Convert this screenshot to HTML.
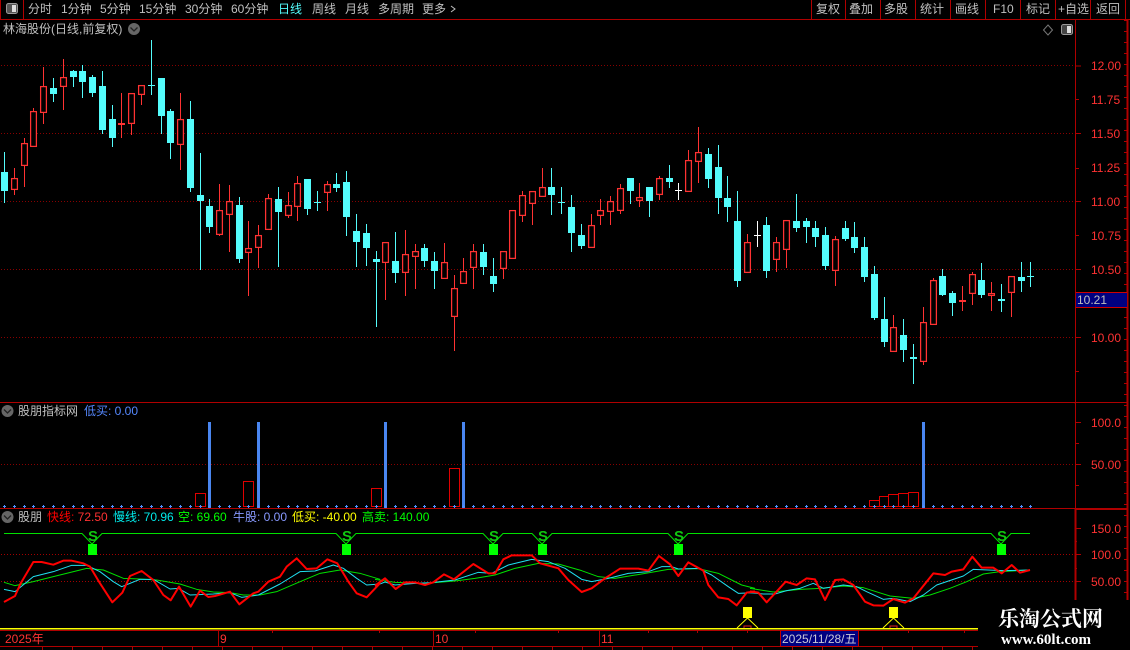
<!DOCTYPE html>
<html lang="zh">
<head>
<meta charset="utf-8">
<title>林海股份</title>
<style>
html,body{margin:0;padding:0;background:#000;}
#wrap{position:relative;width:1130px;height:650px;overflow:hidden;background:#000;font-family:"Liberation Sans","WenQuanYi Zen Hei","Noto Sans CJK SC",sans-serif;font-size:12px;line-height:14px;color:#c0c0c0;}
#wrap svg{position:absolute;left:0;top:0;}
.t{position:absolute;white-space:nowrap;}
.a{color:#ff3232;}
.s{position:absolute;white-space:nowrap;top:530px;color:#10c810;font-size:15px;font-weight:bold;line-height:14px;}
</style>
</head>
<body>
<div id="wrap">
<svg id="s" width="1130" height="650" viewBox="0 0 1130 650" shape-rendering="crispEdges">
  <!-- main frame lines -->
  <g stroke="#b00000" fill="none">
    <path d="M0 19.5H1130M0.5 0V19M23.5 0V19M811.5 0V19M845.5 0V19M880.5 0V19M915.5 0V19M950.5 0V19M985.5 0V19M1020.5 0V19M1055.5 0V19M1090.5 0V19M1125.5 0V19"/>
    <path d="M1075.5 20V600M0 402.5H1127M0 508.5H1127M0 630.5H978M0 646.5H978M218.5 631V646M433.5 631V646M599.5 631V646"/>
    <path d="M1075 403.5V403M1075 509.5H1127" stroke-width="1"/>
    <path d="M1127.5 20V600" stroke-width="2"/>
    <path d="M1075.5 508V600" stroke-width="2"/>
    <path d="M1075 66H1081M1075 99.5H1079M1075 133.5H1081M1075 168.5H1079M1075 201.5H1081M1075 235.5H1079M1075 269.5H1081M1075 303.5H1079M1075 337.5H1081M1075 371.5H1079M1075 422.5H1081M1075 443.5H1079M1075 464.5H1081M1075 485.5H1079M1075 528.5H1081M1075 541.5H1077M1075 554.5H1081M1075 568.5H1077M1075 581.5H1081"/>
    <path d="M272.5 631V633M379.5 631V633M475.5 631V633M558.5 631V633M648.5 631V633M697.5 631V633M747.5 631V633M908.5 631V633M964.5 631V633"/>
  </g>
  <!-- grid -->
  <g stroke="#a00000" stroke-dasharray="1 2" fill="none" opacity=".85">
    <path d="M1 65.5H1075M1 133.5H1075M1 201.5H1075M1 269.5H1075M1 337.5H1075M1 464.5H1075"/>
    <path d="M1 554.5H1075M1 581.5H1075" stroke="#c00000"/>
  </g>
  <g id="ticks" stroke="#b00000" fill="none"></g>
  <g id="candles"></g>

  <!-- indicator 2 -->
  <g fill="#4a86f0">
    <rect x="208" y="422" width="3" height="86"/>
    <rect x="257" y="422" width="3" height="86"/>
    <rect x="384" y="422" width="3" height="86"/>
    <rect x="462" y="422" width="3" height="86"/>
    <rect x="922" y="422" width="3" height="86"/>
  </g>
  <g fill="none" stroke="#e00000">
    <rect x="195.5" y="493.5" width="10" height="13"/>
    <rect x="243.5" y="481.5" width="10" height="25"/>
    <rect x="371.5" y="488.5" width="10" height="18"/>
    <rect x="449.5" y="468.5" width="10" height="38"/>
    <rect x="869.5" y="500.5" width="10" height="6"/>
    <rect x="879.5" y="496.5" width="9" height="10"/>
    <rect x="888.5" y="494.5" width="10" height="12"/>
    <rect x="898.5" y="493.5" width="10" height="13"/>
    <rect x="908.5" y="492.5" width="10" height="14"/>
  </g>
  <g id="plus" fill="#5090ff"></g>

  <!-- indicator 3 -->
  <g shape-rendering="auto" fill="none" stroke-linejoin="round">
    <path stroke="#00e000" stroke-width="1" d="M4 533.5H82L92 544L102 533.5H336L346 544L356 533.5H483L493 544L503 533.5H532L542 544L552 533.5H668L678 544L688 533.5H991L1001 544L1011 533.5H1030"/>
    <!-- green slow -->
    <g stroke="#00e000" stroke-width="1" vector-effect="non-scaling-stroke">
      <polyline transform="translate(0 520) scale(.33333)" stroke-width="3" points="12,187 45,197 100,185 160,170 260,145 310,150 370,175 420,177 470,180 540,192 590,208 640,216 690,218 730,225 780,225 830,215 900,185 960,160 1020,150 1080,160 1140,178"/>
      <polyline transform="translate(375 520) scale(.33333)" stroke-width="3" points="0,178 60,187 150,190 240,183 300,175 360,165 420,145 490,130 550,132 620,152 670,170 720,175 800,162 880,148 970,146 1030,160 1100,195 1140,205"/>
      <polyline transform="translate(750 520) scale(.33333)" stroke-width="3" points="0,205 70,216 150,208 210,205 280,198 340,203 420,228 490,235 540,225 600,205 650,185 700,162 750,155 840,150"/>
    </g>
    <!-- cyan -->
    <g stroke="#20e0f0">
      <polyline transform="translate(0 520) scale(.33333)" stroke-width="3" points="12,208 45,215 100,170 160,155 215,136 260,136 300,155 340,185 365,200 420,178 460,178 510,207 535,205 570,225 640,222 690,218 725,232 775,225 840,192 900,155 945,153 1000,135 1030,145 1070,175 1100,195 1140,192"/>
      <polyline transform="translate(375 520) scale(.33333)" stroke-width="3" points="0,198 30,186 60,195 120,190 170,188 240,180 310,157 350,160 400,135 470,118 520,125 570,145 620,178 650,185 700,175 760,160 820,155 860,140 890,140 910,147 970,145 1010,165 1060,200 1090,220 1140,218"/>
      <polyline transform="translate(750 520) scale(.33333)" stroke-width="3" points="0,218 40,222 75,222 110,212 150,205 190,190 220,205 280,195 320,200 350,215 400,238 430,235 480,245 520,225 560,195 640,168 670,148 760,152 840,150"/>
    </g>
    <!-- red fast -->
    <g stroke="#ff0000">
      <polyline transform="translate(0 520) scale(.33333)" stroke-width="6" points="12,246 45,228 62,190 100,126 125,126 160,134 190,122 215,122 250,130 270,140 300,190 337,247 367,218 390,168 425,153 460,180 490,225 512,241 537,200 572,260 600,212 625,231 645,228 690,215 718,253 760,220 775,215 805,185 840,170 860,140 890,115 920,147 950,145 982,118 1012,130 1045,185 1070,220 1100,232 1140,190"/>
      <polyline transform="translate(375 520) scale(.33333)" stroke-width="6" points="0,197 30,175 62,207 90,187 120,187 150,195 175,187 207,163 237,178 295,132 340,160 360,160 385,118 410,106 470,106 495,130 550,145 580,180 620,216 650,205 690,175 735,146 790,146 820,152 852,108 885,133 910,168 940,127 985,152 1000,195 1030,232 1060,237 1085,256 1115,218 1140,214"/>
      <polyline transform="translate(750 520) scale(.33333)" stroke-width="6" points="0,214 25,218 50,247 75,220 107,185 140,195 170,175 195,178 225,240 255,180 280,178 310,195 345,245 370,256 400,257 430,237 465,248 490,235 550,160 585,165 605,155 640,148 667,110 695,143 730,143 755,160 785,135 810,158 840,150"/>
    </g>
    <path stroke="#ffff00" stroke-width="1" d="M737 628L747.5 618L758 628M883 628L893.5 618L904 628"/>
  </g>
  <rect x="0" y="628" width="978" height="1.5" fill="#ffff00"/>
  <path d="M744 628V626H751V628M890 628V626H897V628" fill="none" stroke="#e02020"/>
  <g fill="#00ff00">
    <rect x="88" y="544" width="9" height="11"/>
    <rect x="342" y="544" width="9" height="11"/>
    <rect x="489" y="544" width="9" height="11"/>
    <rect x="538" y="544" width="9" height="11"/>
    <rect x="674" y="544" width="9" height="11"/>
    <rect x="997" y="544" width="9" height="11"/>
  </g>
  <g fill="#ffff00">
    <rect x="743" y="607" width="9" height="11"/>
    <rect x="889" y="607" width="9" height="11"/>
  </g>
  <!-- icons -->
  <g shape-rendering="auto">
    <rect x="6.5" y="3.5" width="11" height="10" rx="2" fill="#555" stroke="#999"/>
    <rect x="12" y="5" width="4" height="7" fill="#ddd"/>
    <rect x="1061.5" y="24.5" width="11" height="10" rx="2" fill="#444" stroke="#999"/>
    <rect x="1067" y="26" width="4" height="7" fill="#ddd"/>
    <path d="M1048 25L1052.5 30L1048 35L1043.5 30Z" fill="none" stroke="#777"/>
    <circle cx="134" cy="29" r="6" fill="#666"/>
    <path d="M130.5 27.5L134 31L137.5 27.5" fill="none" stroke="#222" stroke-width="1.3"/>
    <circle cx="7.5" cy="411" r="6" fill="#666"/>
    <path d="M4 409.5L7.5 413L11 409.5" fill="none" stroke="#222" stroke-width="1.3"/>
    <circle cx="7.5" cy="517" r="6" fill="#666"/>
    <path d="M4 515.5L7.5 519L11 515.5" fill="none" stroke="#222" stroke-width="1.3"/>
    <path d="M451 6L455 9L451 12" fill="none" stroke="#c0c0c0"/>
  </g>
  <rect x="1076" y="292" width="51" height="16" fill="#000080"/>
  <path d="M1076 292.5H1127M1076 307.5H1127" stroke="#d00000" fill="none"/>
  <rect x="780.5" y="630.5" width="78" height="16" fill="#000080" stroke="#c00000"/>
  <rect x="978" y="600" width="152" height="50" fill="#000"/>
</svg>

<!-- top menu -->
<div class="t" style="left:28px;top:2px">分时</div>
<div class="t" style="left:61px;top:2px">1分钟</div>
<div class="t" style="left:100px;top:2px">5分钟</div>
<div class="t" style="left:139px;top:2px">15分钟</div>
<div class="t" style="left:185px;top:2px">30分钟</div>
<div class="t" style="left:231px;top:2px">60分钟</div>
<div class="t" style="left:278px;top:2px;color:#54fcfc">日线</div>
<div class="t" style="left:312px;top:2px">周线</div>
<div class="t" style="left:345px;top:2px">月线</div>
<div class="t" style="left:378px;top:2px">多周期</div>
<div class="t" style="left:422px;top:2px">更多</div>

<div class="t" style="left:816px;top:2px">复权</div>
<div class="t" style="left:849px;top:2px">叠加</div>
<div class="t" style="left:884px;top:2px">多股</div>
<div class="t" style="left:920px;top:2px">统计</div>
<div class="t" style="left:955px;top:2px">画线</div>
<div class="t" style="left:993px;top:2px">F10</div>
<div class="t" style="left:1026px;top:2px">标记</div>
<div class="t" style="left:1058px;top:2px">+自选</div>
<div class="t" style="left:1096px;top:2px">返回</div>

<div class="t" style="left:3px;top:22px">林海股份(日线,前复权)</div>

<!-- axis labels -->
<div class="t a" style="left:1091px;top:59px">12.00</div>
<div class="t a" style="left:1091px;top:93px">11.75</div>
<div class="t a" style="left:1091px;top:127px">11.50</div>
<div class="t a" style="left:1091px;top:161px">11.25</div>
<div class="t a" style="left:1091px;top:195px">11.00</div>
<div class="t a" style="left:1091px;top:229px">10.75</div>
<div class="t a" style="left:1091px;top:263px">10.50</div>
<div class="t a" style="left:1091px;top:331px">10.00</div>
<div class="t" style="left:1077px;top:293px">10.21</div>
<div class="t a" style="left:1091px;top:416px">100.0</div>
<div class="t a" style="left:1091px;top:458px">50.00</div>
<div class="t a" style="left:1091px;top:522px">150.0</div>
<div class="t a" style="left:1091px;top:548px">100.0</div>
<div class="t a" style="left:1091px;top:575px">50.00</div>

<!-- indicator titles -->
<div class="t" style="left:18px;top:404px">股朋指标网</div>
<div class="t" style="left:84px;top:404px;color:#5588ff">低买: 0.00</div>
<div class="t" style="left:18px;top:510px">股朋</div>
<div class="t" style="left:47px;top:510px;color:#ff0000">快线: <span style="color:#ff3232">72.50</span></div>
<div class="t" style="left:113px;top:510px;color:#00e8e8">慢线: 70.96</div>
<div class="t" style="left:178px;top:510px;color:#00ff00">空: 69.60</div>
<div class="t" style="left:233px;top:510px;color:#8899ff">牛股: 0.00</div>
<div class="t" style="left:292px;top:510px;color:#ffff00">低买: -40.00</div>
<div class="t" style="left:362px;top:510px;color:#00ff00">高卖: 140.00</div>

<!-- S marks -->
<div class="s" style="left:88px">S</div>
<div class="s" style="left:342px">S</div>
<div class="s" style="left:489px">S</div>
<div class="s" style="left:538px">S</div>
<div class="s" style="left:674px">S</div>
<div class="s" style="left:997px">S</div>

<!-- date row -->
<div class="t a" style="left:5px;top:632px">2025年</div>
<div class="t a" style="left:220px;top:632px">9</div>
<div class="t a" style="left:435px;top:632px">10</div>
<div class="t a" style="left:601px;top:632px">11</div>
<div class="t" style="left:782px;top:632px;color:#c8c8d8">2025/11/28/五</div>

<!-- watermark -->
<div class="t" style="left:998px;top:607px;color:#fff;font-size:21px;line-height:24px;font-weight:bold;font-family:'Liberation Serif','Noto Serif CJK SC',serif">乐淘公式网</div>
<div class="t" style="left:1001px;top:632px;color:#fff;font-size:15px;line-height:16px;font-weight:bold;font-family:'Liberation Serif',serif">www.60lt.com</div>

<script>
var X=[4,14,24,33,43,53,63,73,82,92,102,112,121,131,141,151,161,170,180,190,200,209,219,229,239,248,258,268,278,288,297,307,317,327,336,346,356,366,376,385,395,405,415,424,434,444,454,463,473,483,493,503,512,522,532,542,551,561,571,581,591,600,610,620,630,639,649,659,669,678,688,698,708,718,727,737,747,757,766,776,786,796,806,815,825,835,845,854,864,874,884,893,903,913,923,933,942,952,962,972,981,991,1001,1011,1021,1030];
var D=[
"c",152,172,191,202,"r",168,178,189,194,"r",138,143,165,186,"r",108,111,146,146,"r",67,86,112,123,"c",78,88,94,101,"r",59,77,86,109,"c",70,71,77,86,"c",65,71,82,97,"c",75,77,93,96,
"c",71,86,130,133,"c",105,119,138,146,"R",93,123,125,137,"r",93,93,123,134,"r",85,85,94,104,"x",40,85,85,94,"c",78,78,116,133,"c",109,111,143,158,"r",93,119,144,169,"c",101,119,188,191,
"c",153,195,201,269,"c",199,206,227,232,"r",184,210,234,235,"r",185,201,214,251,"c",197,205,259,262,"r",221,248,252,295,"r",225,235,247,267,"r",194,198,229,229,"c",187,199,212,266,"r",192,205,215,217,
"r",176,183,206,220,"c",179,179,209,214,"x",191,202,202,210,"r",181,184,192,210,"c",173,184,188,191,"c",171,182,217,235,"c",214,231,242,266,"c",224,233,248,265,"c",251,259,262,326,"r",242,242,262,299,
"c",232,261,273,282,"r",230,254,272,295,"r",244,251,256,288,"c",244,248,261,266,"c",252,261,271,288,"r",243,262,278,278,"r",275,288,316,350,"r",258,271,283,283,"r",244,251,267,288,"c",244,252,267,274,
"c",258,276,284,291,"r",251,251,268,278,"r",210,210,258,258,"r",191,195,215,221,"r",191,191,203,224,"r",168,187,196,196,"c",168,187,195,214,"x",187,202,202,213,"c",195,207,233,251,"c",224,235,246,248,
"r",214,225,247,247,"r",199,210,215,224,"r",196,201,211,224,"r",184,188,210,213,"c",178,178,191,203,"r",183,197,200,206,"c",187,187,201,216,"r",176,178,194,199,"c",165,178,182,187,"w",183,190,190,199,
"r",150,160,191,191,"r",127,152,161,182,"c",148,154,179,187,"c",145,167,198,213,"c",176,198,207,221,"c",191,221,281,286,"r",234,242,272,272,"w",221,235,235,246,"c",217,225,271,277,"r",237,242,259,271,
"r",220,220,249,267,"c",194,221,228,231,"c",218,221,227,242,"c",221,228,237,246,"c",227,235,266,269,"r",236,239,270,285,"c",221,228,239,240,"c",222,237,248,252,"c",237,247,277,281,"c",266,274,318,319,
"c",297,319,342,346,"r",315,327,351,351,"c",319,335,350,361,"X",344,357,359,383,"r",307,322,361,364,"r",278,280,324,324,"c",269,276,295,295,"c",291,293,303,315,"R",286,300,302,310,"r",272,274,293,304,
"c",263,280,295,297,"r",282,293,295,310,"X",284,299,301,311,"r",276,276,292,316,"c",262,277,281,291,"x",262,276,276,286];
var h="",p="",i,j=0;
for(i=0;i<X.length;i++,j+=5){
 var k=D[j],hi=D[j+1],t=D[j+2],b=D[j+3],lo=D[j+4],x=X[i];
 var col=(k=="r"||k=="R")?"#ff3232":(k=="w"?"#ffffff":"#54fcfc");
 h+='<rect x="'+x+'" y="'+hi+'" width="1" height="'+(lo-hi+1)+'" fill="'+col+'"/>';
 if(k=="c"||k=="X"||k=="R"){h+='<rect x="'+(x-3)+'" y="'+t+'" width="7" height="'+(b-t)+'" fill="'+col+'"/>';}
 else if(k=="r"){h+='<rect x="'+(x-2.4)+'" y="'+(t+.6)+'" width="5.8" height="'+(b-t-.2)+'" fill="#000" stroke="'+col+'" stroke-width="1.25" shape-rendering="auto"/>';}
 else{h+='<rect x="'+(x-3)+'" y="'+t+'" width="7" height="1" fill="'+col+'"/>';}
 p+='<rect x="'+(x-1)+'" y="506" width="3" height="1"/><rect x="'+x+'" y="505" width="1" height="3"/>';
}
document.getElementById("candles").innerHTML=h;
document.getElementById("plus").innerHTML=p;
var tk="";
for(i=20;i<600;i+=11){tk+="M1124 "+(i+.5)+"H1127";}
for(i=42;i<978;i+=30){tk+="M"+(i+.5)+" 647V650";}
document.getElementById("ticks").innerHTML='<path d="'+tk+'"/>';
</script>
</div>
</body>
</html>
